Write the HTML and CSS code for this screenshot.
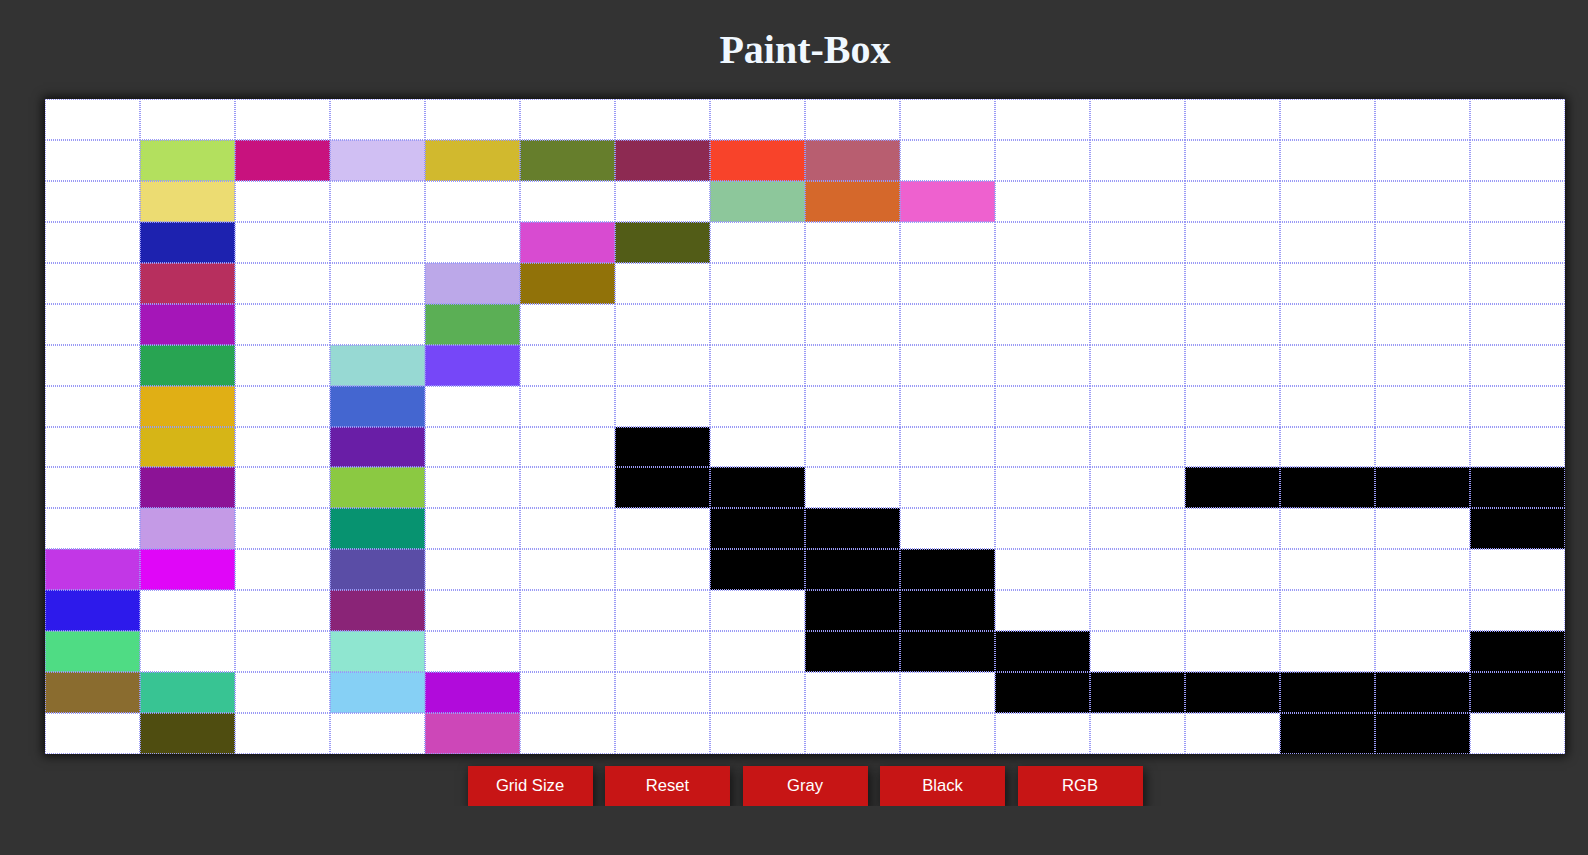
FILE: index.html
```html
<!DOCTYPE html>
<html>
<head>
<meta charset="utf-8">
<title>Paint-Box</title>
<link rel="stylesheet" href="styles.css">
</head>
<body>
<div class="page">
  <h1 class="title">Paint-Box</h1>
  <div class="board" id="board"></div>
  <div class="controls">
    <button class="btn">Grid Size</button>
    <button class="btn">Reset</button>
    <button class="btn">Gray</button>
    <button class="btn">Black</button>
    <button class="btn">RGB</button>
  </div>
</div>
<script src="script.js"></script>
</body>
</html>
```
FILE: styles.css
```css
html, body {
  margin: 0;
  padding: 0;
  background: #333333;
}
.page {
  padding: 28px 23px 0 45px;
  display: flex;
  flex-direction: column;
  align-items: center;
}
.title {
  margin: 0 0 27px 0;
  font-family: "Liberation Serif", "Times New Roman", serif;
  font-weight: bold;
  font-size: 40px;
  line-height: 44px;
  color: #f0f8ff;
}
.board {
  width: 1520px;
  height: 655px;
  display: grid;
  grid-template-columns: repeat(16, 1fr);
  grid-template-rows: repeat(16, 1fr);
  background: #ffffff;
  box-shadow: 0 0 10px 2px rgba(0, 0, 0, 0.8);
}
.cell {
  border: 1px dotted #9a9af5;
  background: #ffffff;
}
.controls {
  margin-top: 12px;
  display: flex;
  gap: 12.5px;
}
.btn {
  width: 125px;
  height: 40px;
  border: none;
  background: #c71515;
  color: #ffffff;
  font-family: "Liberation Sans", Arial, sans-serif;
  font-size: 16.6px;
  box-shadow: 2px 5px 10px 1px rgba(0, 0, 0, 0.6);
  cursor: pointer;
}
```
FILE: script.js
```js
var K = '#000000';
var data = {
  1: {1:'#b3e05e',2:'#c8127e',3:'#d0bff3',4:'#d1b92e',5:'#667e2c',6:'#8d2a52',7:'#f8432a',8:'#b85e70'},
  2: {1:'#ecdc72',7:'#8dc79b',8:'#d5682b',9:'#ee61cf'},
  3: {1:'#1d22af',5:'#d84bd1',6:'#525c17'},
  4: {1:'#b72f5e',4:'#bca8e9',5:'#917209'},
  5: {1:'#a516b8',4:'#5baf55'},
  6: {1:'#28a452',3:'#97d9d3',4:'#7647f8'},
  7: {1:'#e0af15',3:'#4466d0'},
  8: {1:'#d6b517',3:'#691ea6',6:K},
  9: {1:'#8c1396',3:'#8bc942',6:K,7:K,12:K,13:K,14:K,15:K},
  10:{1:'#c49ae6',3:'#079370',7:K,8:K,15:K},
  11:{0:'#c237e6',1:'#e006f8',3:'#5a4da6',7:K,8:K,9:K},
  12:{0:'#2d1aeb',3:'#8a2477',8:K,9:K},
  13:{0:'#4fdc84',3:'#8fe6d0',8:K,9:K,10:K,15:K},
  14:{0:'#8a6c2f',1:'#38c493',3:'#86d0f5',4:'#b10bdb',10:K,11:K,12:K,13:K,14:K,15:K},
  15:{1:'#4f4d10',4:'#cd47b8',13:K,14:K}
};
var board = document.getElementById('board');
for (var r = 0; r < 16; r++) {
  for (var c = 0; c < 16; c++) {
    var d = document.createElement('div');
    d.className = 'cell';
    if (data[r] && data[r][c]) d.style.background = data[r][c];
    board.appendChild(d);
  }
}
```
